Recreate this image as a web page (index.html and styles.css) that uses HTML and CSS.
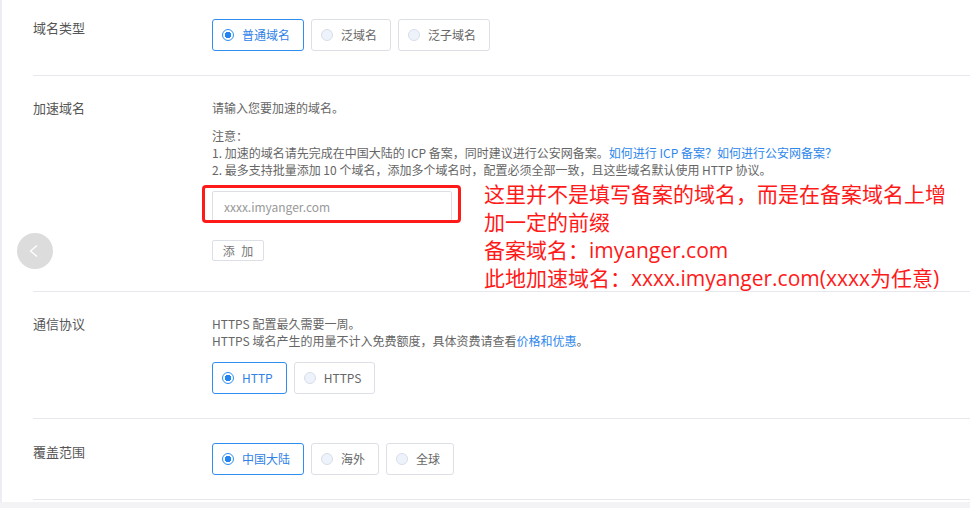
FILE: index.html
```html
<!DOCTYPE html>
<html lang="zh-CN">
<head>
<meta charset="utf-8">
<title>域名配置</title>
<link rel="stylesheet" href="styles.css">
</head>
<body>
<div class="panel">
  <div class="row">
    <div class="label">域名类型</div>
    <div class="content">
      <div class="radio-group">
        <span class="radio-btn checked"><span class="dot"></span>普通域名</span>
        <span class="radio-btn"><span class="dot"></span>泛域名</span>
        <span class="radio-btn"><span class="dot"></span>泛子域名</span>
      </div>
    </div>
  </div>

  <div class="row row-domain">
    <div class="label">加速域名</div>
    <div class="content">
      <p class="line">请输入您要加速的域名。</p>
      <div class="notes">
        <p>注意：</p>
        <p>1. 加速的域名请先完成在中国大陆的 ICP 备案，同时建议进行公安网备案。<a class="link">如何进行 ICP 备案？</a><a class="link">如何进行公安网备案？</a></p>
        <p>2. 最多支持批量添加 10 个域名，添加多个域名时，配置必须全部一致，且这些域名默认使用 HTTP 协议。</p>
      </div>
      <div class="input">xxxx.imyanger.com</div>
      <div class="add-btn">添 加</div>
    </div>
  </div>

  <div class="row row-protocol">
    <div class="label">通信协议</div>
    <div class="content">
      <p class="small">HTTPS 配置最久需要一周。</p>
      <p class="small">HTTPS 域名产生的用量不计入免费额度，具体资费请查看<a class="link">价格和优惠</a>。</p>
      <div class="radio-group gap-top">
        <span class="radio-btn checked"><span class="dot"></span>HTTP</span>
        <span class="radio-btn"><span class="dot"></span>HTTPS</span>
      </div>
    </div>
  </div>

  <div class="row row-area">
    <div class="label">覆盖范围</div>
    <div class="content">
      <div class="radio-group">
        <span class="radio-btn checked"><span class="dot"></span>中国大陆</span>
        <span class="radio-btn"><span class="dot"></span>海外</span>
        <span class="radio-btn"><span class="dot"></span>全球</span>
      </div>
    </div>
  </div>

  <div class="back-btn">
    <svg width="36" height="36" viewBox="0 0 36 36"><polyline points="20,12.5 13.5,18 20,23.5" fill="none" stroke="#ffffff" stroke-width="1.3"/></svg>
  </div>
  <div class="red-box"></div>
  <div class="annotation">这里并不是填写备案的域名，而是在备案域名上增<br>加一定的前缀<br>备案域名：imyanger.com<br>此地加速域名：xxxx.imyanger.com(xxxx为任意)</div>
</div>
<div class="footer-gray"></div>
</body>
</html>
```

FILE: styles.css
```css
html, body {
  margin: 0;
  padding: 0;
  background: #ffffff;
}
body {
  width: 970px;
  height: 508px;
  overflow: hidden;
  font-family: "Noto Sans CJK SC", "Noto Sans", sans-serif;
  font-size: 12px;
  color: #666;
}
p { margin: 0; }

.panel {
  position: relative;
  background: #fff;
  border-left: 2px solid #eceef4;
  padding-left: 31px;
  padding-bottom: 2px;
}

.row {
  display: flex;
  padding: 19px 0 24px;
  border-bottom: 1px solid #e6e8ee;
}
.row-domain { padding: 23px 0 30px; }
.row-protocol { padding: 23px 0 24px; }
.row-area { padding: 24px 0 24px; }

.label {
  width: 179px;
  flex: none;
  font-size: 13px;
  line-height: 18px;
  color: #555;
}
.content { flex: 1; }

.line { line-height: 18px; }
.notes { margin-top: 10px; }
.notes p, .small { line-height: 17px; }

.link { color: #2e87ec; text-decoration: none; }

.radio-group {
  display: flex;
  gap: 7px;
}
.gap-top { margin-top: 13px; }

.radio-btn {
  display: inline-flex;
  align-items: center;
  gap: 8px;
  height: 32px;
  box-sizing: border-box;
  padding: 0 13px 0 9px;
  border: 1px solid #dcdfe6;
  border-radius: 3px;
  color: #666;
  line-height: 1;
}
.radio-btn .dot {
  width: 12px;
  height: 12px;
  box-sizing: border-box;
  border-radius: 50%;
  border: 1px solid #d8dee8;
  background: #eef3fb;
  flex: none;
}
.radio-btn.checked {
  border-color: #2f8ef0;
  color: #2f82e6;
}
.radio-btn.checked .dot {
  border: 1.5px solid #2f8ef0;
  background: radial-gradient(circle, #2386f0 0 3px, #ffffff 3.5px);
}

.input {
  margin-top: 13px;
  width: 240px;
  height: 32px;
  box-sizing: border-box;
  border: 1px solid #dcdfe6;
  border-radius: 2px;
  padding-left: 11px;
  line-height: 30px;
  color: #999;
}
.add-btn {
  margin-top: 17px;
  width: 52px;
  height: 21px;
  box-sizing: border-box;
  border: 1px solid #dcdfe6;
  border-radius: 2px;
  text-align: center;
  line-height: 19px;
  color: #777;
  font-size: 12px;
  letter-spacing: 2px;
  text-indent: 2px;
}

.back-btn {
  position: absolute;
  left: 15px;
  top: 233px;
  width: 36px;
  height: 36px;
  border-radius: 50%;
  background: #dcdcdc;
}
.back-btn svg { display: block; }

.red-box {
  position: absolute;
  left: 200px;
  top: 185px;
  width: 259px;
  height: 38px;
  box-sizing: border-box;
  border: 3px solid #ff1a1a;
  border-radius: 4px;
}

.annotation {
  position: absolute;
  left: 482px;
  top: 180px;
  font-family: "Open Sans", "Noto Sans CJK SC", sans-serif;
  font-size: 21px;
  font-weight: 400;
  line-height: 28px;
  color: #ff1a1a;
  white-space: nowrap;
}

.footer-gray {
  height: 10px;
  background: #f3f3f5;
}
```
